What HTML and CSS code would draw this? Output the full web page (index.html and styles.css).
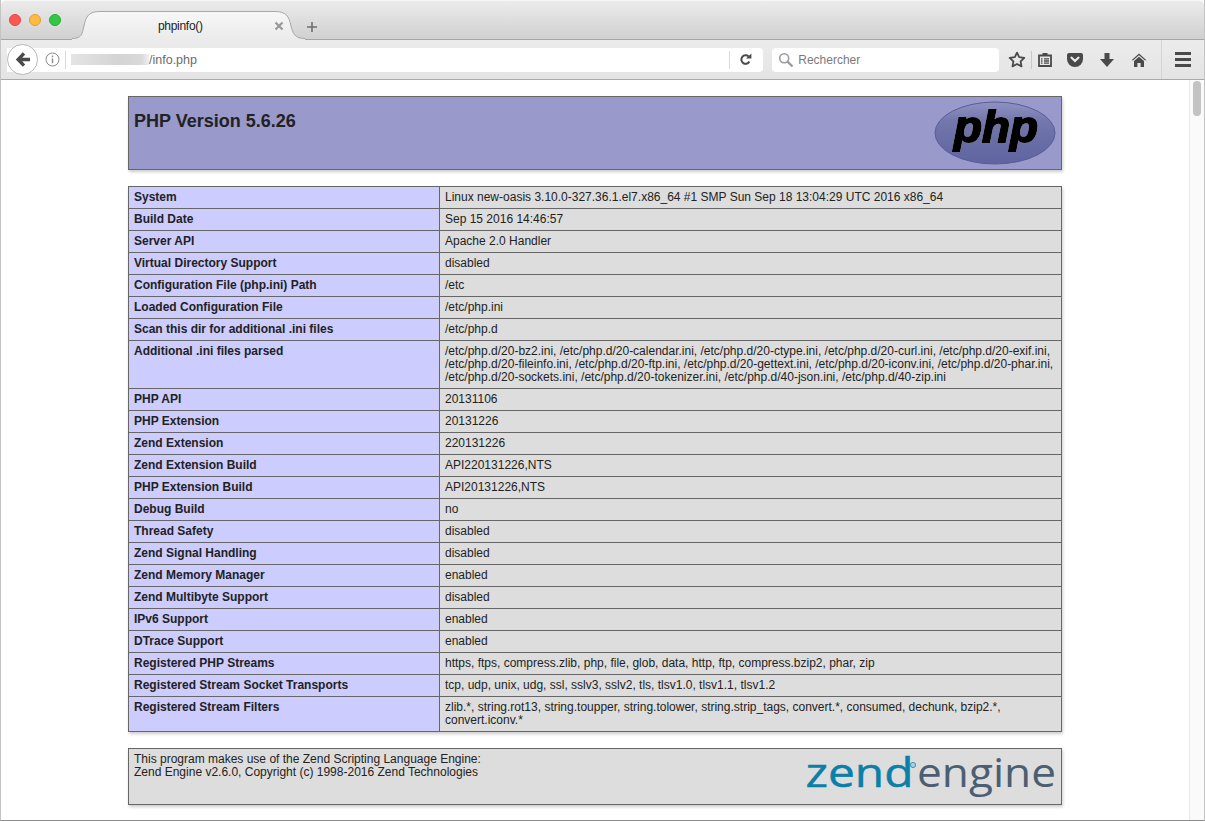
FILE: index.html
```html
<!doctype html>
<html lang="en">
  <head>
    <meta charset="UTF-8" />
    <title>phpinfo()</title>
    <link rel="stylesheet" href="styles.css">
  </head>
  <body>
    <div class="window">
      <div class="titlebar">
        <div class="lights">
          <span class="light red"></span>
          <span class="light yellow"></span>
          <span class="light green"></span>
        </div>
        <div class="tab">
          <svg class="tab-shape" width="233" height="30" viewBox="0 0 233 30">
            <defs>
              <linearGradient id="tabfill" x1="0" y1="0" x2="0" y2="1">
                <stop offset="0" stop-color="#f7f7f7" />
                <stop offset="1" stop-color="#ebebeb" />
              </linearGradient>
            </defs>
            <path d="M0 28.5 C10 28.5 10 24 12 16 C14 6 17 1.5 28 1.5 L203 1.5 C214 1.5 217 6 219 16 C221 24 223 28.5 233 28.5 L233 30 L0 30 Z" fill="url(#tabfill)" />
            <path d="M0 28.5 C10 28.5 10 24 12 16 C14 6 17 1.5 28 1.5 L203 1.5 C214 1.5 217 6 219 16 C221 24 223 28.5 233 28.5" fill="none" stroke="#a8a8a8" />
          </svg>
          <span class="tab-title">phpinfo()</span>
          <svg class="tab-close" width="10" height="10" viewBox="0 0 10 10">
            <path d="M1.5 1.5 L8.5 8.5 M8.5 1.5 L1.5 8.5" stroke="#999" stroke-width="2.2" />
          </svg>
        </div>
        <svg class="new-tab" width="12" height="12" viewBox="0 0 12 12">
          <path d="M6 1 V11 M1 6 H11" stroke="#6e6e6e" stroke-width="1.6" />
        </svg>
      </div>

      <div class="toolbar">
        <div class="urlbar">
          <div class="back">
            <svg width="16" height="15" viewBox="0 0 16 15">
              <path d="M7.8 0.2 L0.8 7.5 L7.8 14.8 L10.2 12.4 L7.2 9.3 H15 V5.7 H7.2 L10.2 2.6 Z" fill="#4a4a4a" />
            </svg>
          </div>
          <svg class="info" width="15" height="15" viewBox="0 0 15 15">
            <circle cx="7.5" cy="7.5" r="6.5" fill="none" stroke="#8a8a8a" />
            <path d="M7.5 6.4 V11.2 M7.5 3.6 V5.2" stroke="#8a8a8a" stroke-width="1.4" />
          </svg>
          <span class="url-sep"></span>
          <span class="url-blur"></span>
          <span class="url-path">/info.php</span>
          <span class="url-sep end"></span>
          <svg class="reload" width="13" height="13" viewBox="0 0 13 13">
            <path d="M10.4 8.6 A4.3 4.3 0 1 1 9.6 3.4" fill="none" stroke="#4a4a4a" stroke-width="2" />
            <path d="M7 5.6 H12.4 V0.4 Z" fill="#4a4a4a" />
          </svg>
        </div>
        <div class="searchbar">
          <svg width="16" height="16" viewBox="0 0 16 16">
            <circle cx="6.2" cy="6.2" r="4.5" fill="none" stroke="#9a9a9a" stroke-width="1.6" />
            <path d="M9.6 9.6 L14.5 14.5" stroke="#9a9a9a" stroke-width="2.2" />
          </svg>
          <span class="search-label">Rechercher</span>
        </div>
        <div class="tools">
          <svg class="star" width="18" height="17" viewBox="0 0 18 17">
            <path d="M9 1.6 L11.2 6.2 L16.3 6.9 L12.6 10.4 L13.5 15.4 L9 13 L4.5 15.4 L5.4 10.4 L1.7 6.9 L6.8 6.2 Z" fill="none" stroke="#4a4a4a" stroke-width="1.8" stroke-linejoin="round" />
          </svg>
          <span class="tool-sep"></span>
          <svg class="list" width="14" height="15" viewBox="0 0 14 15">
            <path d="M1 3.5 H13 V14 H1 Z" fill="none" stroke="#4a4a4a" stroke-width="1.8" />
            <path d="M4.5 1 H9.5 V4 H4.5 Z" fill="#4a4a4a" />
            <path d="M3 6.8 H4.5 M6 6.8 H11 M3 9 H4.5 M6 9 H11 M3 11.2 H4.5 M6 11.2 H11" stroke="#4a4a4a" stroke-width="1.3" />
          </svg>
          <svg class="pocket" width="16" height="14" viewBox="0 0 16 14">
            <path d="M2 0 H14 A2 2 0 0 1 16 2 V6 A8 8 0 0 1 0 6 V2 A2 2 0 0 1 2 0 Z" fill="#4a4a4a" />
            <path d="M4.4 4.6 L8 8 L11.6 4.6" fill="none" stroke="#ececec" stroke-width="2" stroke-linecap="round" />
          </svg>
          <svg class="download" width="14" height="14" viewBox="0 0 14 14">
            <path d="M4.5 0 H9.5 V6 H14 L7 14 L0 6 H4.5 Z" fill="#4a4a4a" />
          </svg>
          <svg class="home" width="16" height="14" viewBox="0 0 16 14">
            <path d="M8 0.5 L15.5 7.2 H13.8 L8 2.3 L2.2 7.2 H0.5 Z" fill="#4a4a4a" />
            <path d="M8 3.8 L13 8 V14 H9.6 V10 H6.4 V14 H3 V8 Z" fill="#4a4a4a" />
          </svg>
        </div>
        <div class="menu-btn">
          <span></span>
          <span></span>
          <span></span>
        </div>
      </div>

      <div class="viewport">
        <div class="page">
          <table class="head-table">
            <tr>
              <td>
                <div class="head-row">
                  <h1>PHP Version 5.6.26</h1>
                  <svg class="php-logo" width="122" height="64" viewBox="0 0 122 64">
                    <defs>
                      <linearGradient id="phpfill" x1="0" y1="0" x2="0" y2="1">
                        <stop offset="0" stop-color="#8f92c0" />
                        <stop offset="0.3" stop-color="#7377ad" />
                        <stop offset="1" stop-color="#5f639f" />
                      </linearGradient>
                    </defs>
                    <ellipse cx="61" cy="32" rx="60" ry="31" fill="url(#phpfill)" stroke="#5a5e96" />
                    <text class="php-word" x="20" y="41" textLength="84" lengthAdjust="spacingAndGlyphs">php</text>
                  </svg>
                </div>
              </td>
            </tr>
          </table>

          <table class="info-table">
            <tr><td class="e">System</td><td class="v">Linux new-oasis 3.10.0-327.36.1.el7.x86_64 #1 SMP Sun Sep 18 13:04:29 UTC 2016 x86_64</td></tr>
            <tr><td class="e">Build Date</td><td class="v">Sep 15 2016 14:46:57</td></tr>
            <tr><td class="e">Server API</td><td class="v">Apache 2.0 Handler</td></tr>
            <tr><td class="e">Virtual Directory Support</td><td class="v">disabled</td></tr>
            <tr><td class="e">Configuration File (php.ini) Path</td><td class="v">/etc</td></tr>
            <tr><td class="e">Loaded Configuration File</td><td class="v">/etc/php.ini</td></tr>
            <tr><td class="e">Scan this dir for additional .ini files</td><td class="v">/etc/php.d</td></tr>
            <tr><td class="e">Additional .ini files parsed</td><td class="v">/etc/php.d/20-bz2.ini, /etc/php.d/20-calendar.ini, /etc/php.d/20-ctype.ini, /etc/php.d/20-curl.ini, /etc/php.d/20-exif.ini, /etc/php.d/20-fileinfo.ini, /etc/php.d/20-ftp.ini, /etc/php.d/20-gettext.ini, /etc/php.d/20-iconv.ini, /etc/php.d/20-phar.ini, /etc/php.d/20-sockets.ini, /etc/php.d/20-tokenizer.ini, /etc/php.d/40-json.ini, /etc/php.d/40-zip.ini</td></tr>
            <tr><td class="e">PHP API</td><td class="v">20131106</td></tr>
            <tr><td class="e">PHP Extension</td><td class="v">20131226</td></tr>
            <tr><td class="e">Zend Extension</td><td class="v">220131226</td></tr>
            <tr><td class="e">Zend Extension Build</td><td class="v">API220131226,NTS</td></tr>
            <tr><td class="e">PHP Extension Build</td><td class="v">API20131226,NTS</td></tr>
            <tr><td class="e">Debug Build</td><td class="v">no</td></tr>
            <tr><td class="e">Thread Safety</td><td class="v">disabled</td></tr>
            <tr><td class="e">Zend Signal Handling</td><td class="v">disabled</td></tr>
            <tr><td class="e">Zend Memory Manager</td><td class="v">enabled</td></tr>
            <tr><td class="e">Zend Multibyte Support</td><td class="v">disabled</td></tr>
            <tr><td class="e">IPv6 Support</td><td class="v">enabled</td></tr>
            <tr><td class="e">DTrace Support</td><td class="v">enabled</td></tr>
            <tr><td class="e">Registered PHP Streams</td><td class="v">https, ftps, compress.zlib, php, file, glob, data, http, ftp, compress.bzip2, phar, zip</td></tr>
            <tr><td class="e">Registered Stream Socket Transports</td><td class="v">tcp, udp, unix, udg, ssl, sslv3, sslv2, tls, tlsv1.0, tlsv1.1, tlsv1.2</td></tr>
            <tr><td class="e">Registered Stream Filters</td><td class="v">zlib.*, string.rot13, string.toupper, string.tolower, string.strip_tags, convert.*, consumed, dechunk, bzip2.*, convert.iconv.*</td></tr>
          </table>

          <table class="foot-table">
            <tr>
              <td>
                <div class="foot-row">
                  <p>This program makes use of the Zend Scripting Language Engine:<br />Zend Engine v2.6.0, Copyright (c) 1998-2016 Zend Technologies</p>
                  <svg class="zend-logo" width="252" height="64" viewBox="0 0 252 64">
                    <text class="zend-word" x="1.5" y="44" textLength="108" lengthAdjust="spacingAndGlyphs">zend</text>
                    <circle cx="109" cy="22" r="2.6" fill="#a8d0e0" stroke="#3f95ba" stroke-width="1" />
                    <text class="engine-word" x="113" y="44" textLength="139" lengthAdjust="spacingAndGlyphs">engine</text>
                  </svg>
                </div>
              </td>
            </tr>
          </table>
        </div>
        <div class="scrollbar">
          <span class="thumb"></span>
        </div>
      </div>
    </div>
  </body>
</html>
```

FILE: styles.css
```css
* {
  box-sizing: border-box;
}

html,
body {
  height: 100%;
}

body {
  margin: 0;
  background-color: #fff;
  font-family: "Liberation Sans", Arial, sans-serif;
  color: #222;
  overflow: hidden;
}

.window {
  height: 821px;
  display: flex;
  flex-direction: column;
  border-bottom: 1px solid #8c8c8c;
  border-left: 1px solid #c4c4c4;
  border-right: 1px solid #c4c4c4;
}

.titlebar {
  height: 40px;
  flex: none;
  display: flex;
  align-items: flex-end;
  background: linear-gradient(#ebebeb, #d0d0d0);
  border-top: 1px solid #f6f6f6;
  border-bottom: 1px solid #a5a5a5;
  border-radius: 5px 5px 0 0;
}

.lights {
  display: flex;
  gap: 8px;
  padding: 0 0 13px 8px;
}
.light {
  width: 12px;
  height: 12px;
  border-radius: 12px;
}
.light.red {
  background-color: #fc5753;
  border: 1px solid #df4744;
}
.light.yellow {
  background-color: #fdbc40;
  border: 1px solid #de9f34;
}
.light.green {
  background-color: #33c748;
  border: 1px solid #27aa35;
}

.tab {
  position: relative;
  width: 233px;
  height: 30px;
  margin-left: 11px;
  margin-bottom: -1px;
  display: flex;
  align-items: center;
}
.tab-shape {
  position: absolute;
  left: 0;
  top: 0;
}
.tab-title {
  position: relative;
  margin-left: 86px;
  margin-top: 1px;
  font-size: 12px;
  letter-spacing: -0.3px;
  color: #222;
}
.tab-close {
  position: absolute;
  left: 202px;
  top: 11px;
}
.new-tab {
  margin: 0 0 6px 1px;
}

.toolbar {
  height: 40px;
  flex: none;
  display: flex;
  align-items: center;
  background: linear-gradient(#ececec, #e4e4e4);
  border-bottom: 1px solid #a9a9a9;
}

.urlbar {
  position: relative;
  width: 757px;
  height: 24px;
  margin-left: 6px;
  padding-left: 38px;
  display: flex;
  align-items: center;
  background-color: #fff;
  border-radius: 0 4px 4px 0;
  font-size: 13px;
  color: #6b6b6b;
}
.back {
  position: absolute;
  left: 0;
  top: -4px;
  width: 31px;
  height: 31px;
  display: flex;
  align-items: center;
  justify-content: center;
  background-color: #fff;
  border: 1px solid #b8b8b8;
  border-radius: 31px;
}
.info {
  flex: none;
}
.url-sep {
  width: 1px;
  height: 18px;
  margin: 0 5px 0 5px;
  background-color: #d9d9d9;
}
.url-sep.end {
  margin: 0 9px 0 auto;
}
.url-blur {
  width: 78px;
  height: 11px;
  background: linear-gradient(90deg, #e4e4e4, #d4d4d4 60%, #d9d9d9 90%, #f0f0f0);
}
.url-path {
  margin-top: 1px;
  font-size: 12.5px;
}
.reload {
  margin-right: 11px;
}

.searchbar {
  width: 227px;
  height: 24px;
  margin-left: 9px;
  padding-left: 6px;
  display: flex;
  align-items: center;
  gap: 4px;
  background-color: #fff;
  border-radius: 4px;
  font-size: 12px;
  color: #7a7a7a;
}
.search-label {
  margin-top: 1px;
}

.tools {
  height: 100%;
  margin-left: 9px;
  display: flex;
  align-items: center;
}
.tool-sep {
  width: 1px;
  height: 18px;
  margin: 0 6px 0 5px;
  background-color: #c8c8c8;
}
.pocket {
  margin-left: 15px;
}
.download {
  margin-left: 17px;
}
.home {
  margin-left: 17px;
}

.menu-btn {
  height: 100%;
  margin-left: 14px;
  padding: 0 13px 0 13px;
  display: flex;
  flex-direction: column;
  justify-content: center;
  gap: 3px;
  border-left: 1px solid #d4d4d4;
}
.menu-btn span {
  display: block;
  width: 16px;
  height: 3px;
  background-color: #4a4a4a;
}

.viewport {
  flex: 1;
  display: flex;
  min-height: 0;
  background-color: #fff;
}

.page {
  flex: 1;
  padding: 16px 127px 0 127px;
  min-width: 0;
}

table {
  width: 934px;
  border-collapse: collapse;
  table-layout: fixed;
  box-shadow: 1px 2px 3px #ccc;
  font-size: 12px;
  line-height: 13px;
}
td {
  border: 1px solid #666;
  padding: 4px 5px;
  vertical-align: top;
}

.head-table {
  margin-bottom: 16px;
}
.head-table td {
  height: 73px;
  background-color: #9999cc;
}
.head-row {
  display: flex;
  justify-content: space-between;
  height: 64px;
}
h1 {
  margin: 9px 0 0;
  font-size: 18px;
  line-height: 22px;
  font-weight: bold;
}
.php-word {
  font-family: "Liberation Sans", Arial, sans-serif;
  font-style: italic;
  font-weight: bold;
  font-size: 44px;
  fill: #000;
  stroke: #000;
  stroke-width: 2px;
  filter: drop-shadow(0 0 0.6px #fff);
}

.info-table {
  margin-bottom: 16px;
}
.e {
  width: 311px;
  background-color: #ccccff;
  font-weight: bold;
}
.v {
  background-color: #dddddd;
}

.foot-table td {
  height: 56px;
  background-color: #dddddd;
}
.foot-row {
  display: flex;
  justify-content: space-between;
  height: 47px;
}
.foot-row p {
  margin: 0;
}
.zend-logo {
  margin: -10px 0 -7px 0;
}
.zend-word {
  font-family: "Open Sans", sans-serif;
  font-size: 41px;
  fill: #0a7fa8;
  stroke: #0a7fa8;
  stroke-width: 0.5px;
}
.engine-word {
  font-family: "Open Sans", sans-serif;
  font-size: 41px;
  fill: #4c5f72;
}

.scrollbar {
  width: 15px;
  flex: none;
  padding: 1px 3px 0 3px;
  background-color: #fafafa;
  border-left: 1px solid #e8e8e8;
}
.thumb {
  display: block;
  width: 8px;
  height: 35px;
  background-color: #c2c2c2;
  border-radius: 8px;
}
```
